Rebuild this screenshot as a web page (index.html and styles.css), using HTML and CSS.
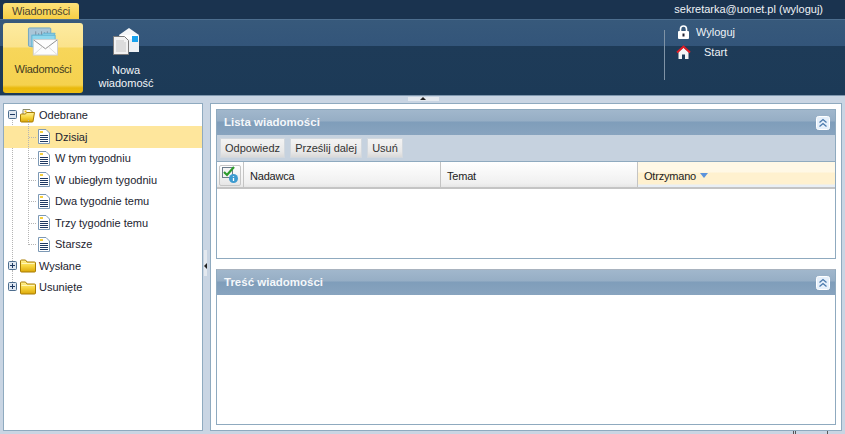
FILE: index.html
```html
<!DOCTYPE html>
<html lang="pl">
<head>
<meta charset="utf-8">
<title>Wiadomości</title>
<link rel="stylesheet" href="styles.css">
</head>
<body>
<svg class="defs" width="0" height="0" aria-hidden="true">
  <defs>
    <linearGradient id="fold" x1="0" y1="0" x2="0" y2="1"><stop offset="0" stop-color="#fff29a"/><stop offset=".5" stop-color="#f7d53e"/><stop offset="1" stop-color="#dba708"/></linearGradient>
    <symbol id="doc" viewBox="0 0 12 15">
      <path d="M.5.5h7.500l3.500 3.500v10.500h-11z" fill="#fff" stroke="#7d99b5"/>
      <rect x="2" y="2" width="3" height="2" fill="#f5cf3d"/>
      <path d="M2 6.500h8M2 8.500h8M2 10.500h8M2 12.500h8" stroke="#1f3a63"/>
    </symbol>
    <symbol id="folder" viewBox="0 0 16 15">
      <path d="M.5 13V3q0-1 1-1h4l1.500 2h7.500q1 0 1 1v8q0 1-1 1h-13q-1 0-1-1z" fill="url(#fold)" stroke="#a87d05"/>
      <path d="M1.500 5.500h13" stroke="#fff6b8"/>
    </symbol>
    <symbol id="plus" viewBox="0 0 9 9">
      <rect x=".5" y=".5" width="8" height="8" rx="1" fill="#dfe7f0" stroke="#4d6d8e"/>
      <path d="M2 4.500h5M4.500 2v5" stroke="#1f3a63"/>
    </symbol>
    <symbol id="minus" viewBox="0 0 9 9">
      <rect x=".5" y=".5" width="8" height="8" rx="1" fill="#dfe7f0" stroke="#4d6d8e"/>
      <path d="M2 4.500h5" stroke="#1f3a63"/>
    </symbol>
    <symbol id="chev" viewBox="0 0 14 14">
      <rect x=".5" y=".5" width="13" height="13" rx="2" fill="#e6f0fb" stroke="#fff"/>
      <path d="M3.500 6.500 7 3.500l3.500 3M3.500 10.500 7 7.500l3.500 3" fill="none" stroke="#4a79ac" stroke-width="1.300"/>
    </symbol>
  </defs>
</svg>

<header class="topbar">
  <div class="tab">Wiadomości</div>
  <div class="user">sekretarka@uonet.pl (wyloguj)</div>
</header>

<nav class="ribbon">
  <div class="rb rb-active">
    <svg class="rb-icon" width="32" height="31" viewBox="0 0 33 31">
      <rect x="1.500" y="1.500" width="23" height="19" rx="1" fill="#a9c6d8" stroke="#6fa6c4"/>
      <path d="M9 5v8M12 7v6M15 5v8M18 6v7M21 5v8" stroke="#7b8fa0"/>
      <path d="M5 10h22l2-3h-12l-2 2h-9z" fill="#8fd3ea" stroke="#63b3d2"/>
      <rect x="5" y="9" width="24" height="12" fill="#8fd8ee" stroke="#63b3d2"/>
      <rect x="6.500" y="13.500" width="25" height="16" fill="#fdfdfd" stroke="#cfcfcf"/>
      <path d="M7 14l12 9 12-9" fill="none" stroke="#8d8d8d"/>
      <path d="M7 29l9-8M31 29l-9-8" fill="none" stroke="#dcdcdc"/>
    </svg>
    <span class="rb-label rb-tight">Wiadomości</span>
  </div>
  <div class="rb rb-new">
    <svg class="rb-icon" width="29" height="28" viewBox="0 0 29 28">
      <path d="M7 8 17 1l10 7v17H7z" fill="#f4f6f8"/>
      <path d="M7 8l10 9 10-9" fill="#fff" stroke="#d5dae0"/>
      <rect x="7" y="12" width="20" height="13" fill="#eef1f4"/>
      <rect x="20" y="9" width="6" height="6" fill="#18a2ee"/>
      <path d="M1.500 9.500h11l4 4v14h-15z" fill="#f2f2f2" stroke="#7b7b7b"/>
      <path d="M4 14h8M4 16h10M4 18h10M4 20h10M4 22h10M4 24h10" stroke="#c6c6c6"/>
    </svg>
    <span class="rb-label">Nowa<br>wiadomość</span>
  </div>
  <div class="rb-links">
    <div class="rb-link">
      <svg width="13" height="14" viewBox="0 0 13 14"><path d="M3.500 7V4a3 3 0 0 1 6 0v3" fill="none" stroke="#fff" stroke-width="1.600"/><rect x="1" y="6" width="11" height="8" rx="1" fill="#fff"/><rect x="5.500" y="8.500" width="2" height="3" fill="#223"/></svg>
      <span>Wyloguj</span>
    </div>
    <div class="rb-link rb-link-start">
      <svg width="15" height="14" viewBox="0 0 15 14"><path d="M2.500 7 7.500 2.500l5 4.500v7H9V9.500H6V14H2.500z" fill="#f4f4f4"/><path d="M1 7.500 7.500 1.500 14 7.500" fill="none" stroke="#e01b24" stroke-width="2"/></svg>
      <span>Start</span>
    </div>
  </div>
</nav>

<main class="main">
  <aside class="tree">
    <div class="row"><svg class="tg" width="9" height="9"><use href="#minus"/></svg>
      <svg class="fi" width="16" height="15" viewBox="0 0 16 15"><path d="M3 11V1.500h7l3 3V11z" fill="#fff" stroke="#8a8a6a"/><rect x="4.500" y="2.500" width="2" height="2" fill="#e9b90f"/><path d="M.5 13.500V7q0-1 1-1h4l1-1.500h8l-1.500 9q0 .5-1 .5h-10.500z" fill="url(#fold)" stroke="#a87d05"/></svg>
      <span class="t1">Odebrane</span></div>
    <div class="children">
      <div class="row leaf sel"><svg class="di" width="12" height="15"><use href="#doc"/></svg><span class="t2">Dzisiaj</span></div>
      <div class="row leaf"><svg class="di" width="12" height="15"><use href="#doc"/></svg><span class="t2">W tym tygodniu</span></div>
      <div class="row leaf"><svg class="di" width="12" height="15"><use href="#doc"/></svg><span class="t2">W ubiegłym tygodniu</span></div>
      <div class="row leaf"><svg class="di" width="12" height="15"><use href="#doc"/></svg><span class="t2">Dwa tygodnie temu</span></div>
      <div class="row leaf"><svg class="di" width="12" height="15"><use href="#doc"/></svg><span class="t2">Trzy tygodnie temu</span></div>
      <div class="row leaf last"><svg class="di" width="12" height="15"><use href="#doc"/></svg><span class="t2">Starsze</span></div>
    </div>
    <div class="row"><svg class="tg" width="9" height="9"><use href="#plus"/></svg><svg class="fi" width="16" height="15"><use href="#folder"/></svg><span class="t1">Wysłane</span></div>
    <div class="row"><svg class="tg" width="9" height="9"><use href="#plus"/></svg><svg class="fi" width="16" height="15"><use href="#folder"/></svg><span class="t1">Usunięte</span></div>
  </aside>

  <div class="vsplit"><span class="vhandle"></span></div>

  <section class="content">
    <span class="hhandle"></span>
    <div class="panel panel-list">
      <div class="ph"><span class="ph-title">Lista wiadomości</span><svg width="14" height="14"><use href="#chev"/></svg></div>
      <div class="toolbar">
        <button class="btn w1">Odpowiedz</button>
        <button class="btn w2">Prześlij dalej</button>
        <button class="btn w3">Usuń</button>
      </div>
      <div class="grid-head">
        <div class="col col-check"><span class="chk">
          <svg width="18" height="18" viewBox="0 0 18 18"><rect x="1.500" y="1.500" width="10" height="10" fill="#f4f4f4" stroke="#6d7d8c"/><path d="M3 6l3 3 7-8" fill="none" stroke="#2c9a2c" stroke-width="2.200"/><circle cx="12.500" cy="12.500" r="4.500" fill="#3d9bd0"/><path d="M12.500 10v.8M12.500 12v3" stroke="#fff" stroke-width="1.300"/></svg>
        </span></div>
        <div class="col col-flex">Nadawca</div>
        <div class="col col-flex">Temat</div>
        <div class="col col-flex col-sort">Otrzymano<i class="sort"></i></div>
      </div>
    </div>
    <div class="panel panel-body">
      <div class="ph"><span class="ph-title">Treść wiadomości</span><svg width="14" height="14"><use href="#chev"/></svg></div>
    </div>
  </section>
</main>
<footer class="foot"><i></i><i></i><i class="far"></i></footer>
</body>
</html>
```
FILE: styles.css
```css
* { box-sizing: border-box; }
html, body { margin: 0; height: 100%; }
body {
  width: 845px;
  height: 434px;
  overflow: hidden;
  background: #c9d5e3;
  font: 11px "Liberation Sans", Arial, sans-serif;
  color: #222;
  display: flex;
  flex-direction: column;
}
.defs { position: absolute; }

.topbar {
  height: 19px;
  flex: none;
  background: #1a334f;
  display: flex;
  align-items: flex-end;
  justify-content: space-between;
  padding: 0 22px 0 3px;
}
.tab {
  width: 76px;
  height: 16px;
  border-radius: 3px 3px 0 0;
  background: linear-gradient(#fde27a, #f7cf45);
  color: #4a4430;
  text-align: center;
  line-height: 16px;
  letter-spacing: -.2px;
}
.user { color: #eef2f6; line-height: 18px; align-self: flex-start; }

.ribbon {
  height: 77px;
  flex: none;
  display: flex;
  padding: 3px 0 3px 3px;
  border-top: 1px solid #4d6e8e;
  border-bottom: 1px solid #7f97ae;
  background: linear-gradient(#37597b 0, #33557a 26px, #1e3b58 26px, #1c3a57 100%);
}
.rb {
  width: 80px;
  height: 70px;
  display: flex;
  flex-direction: column;
  align-items: center;
  color: #f2f5f8;
  text-align: center;
  line-height: 13px;
}
.rb-active {
  border-radius: 3px;
  color: #403a22;
  padding-top: 3px;
  background: linear-gradient(#fdeba0 0, #fbe38c 24px, #f7d65a 25px, #f5d24f 62px, #e9b90c 65px, #eebf14 100%);
}
.rb-active .rb-label { margin-top: 6px; }
.rb-tight { letter-spacing: -.3px; }
.rb-icon { display: block; flex: none; }
.rb-new { margin-left: 3px; padding-top: 4px; }
.rb-new .rb-label { margin-top: 9px; }
.rb-links {
  margin: 7px 0 0 498px;
  height: 50px;
  padding-left: 12px;
  border-left: 1px solid #7f93a6;
  color: #eef2f6;
}
.rb-link { display: flex; align-items: center; height: 20px; margin-top: -8px; margin-bottom: 8px; }
.rb-link span { margin-left: 6px; }
.rb-link-start { margin-left: -1px; }
.rb-link-start span { margin-left: 13px; }

.main {
  height: 328px;
  flex: none;
  margin-top: 7px;
  padding: 0 3px;
  display: flex;
}
.tree {
  width: 200px;
  flex: none;
  background: #fff;
  border: 1px solid #8faabf;
  padding-top: .5px;
}
.row {
  position: relative;
  height: 21.5px;
  display: flex;
  align-items: center;
  padding-left: 4px;
  white-space: nowrap;
  color: #1c2430;
}
.tg { flex: none; margin-top: -1px; }
.fi { flex: none; margin-left: 3px; }
.t1 { margin-left: 3px; }
.row:not(.leaf) + .row:not(.leaf)::before {
  content: "";
  position: absolute;
  left: 8px;
  top: -7px;
  height: 12px;
  border-left: 1px dotted #b5b5b5;
}
.children { position: relative; }
.children::before {
  content: "";
  position: absolute;
  left: 8px;
  top: -6px;
  bottom: -6px;
  border-left: 1px dotted #b5b5b5;
}
.children::after {
  content: "";
  position: absolute;
  left: 24px;
  top: -6px;
  bottom: 10px;
  border-left: 1px dotted #b5b5b5;
}
.leaf { padding-left: 34px; }
.leaf::before {
  content: "";
  position: absolute;
  left: 25px;
  top: 50%;
  width: 7px;
  border-top: 1px dotted #b5b5b5;
}
.sel { background: #fee69c; }
.di { flex: none; }
.t2 { margin-left: 5px; }

.vsplit {
  width: 7px;
  flex: none;
  position: relative;
}
.vhandle {
  position: absolute;
  left: 1px;
  top: 147px;
  width: 3px;
  height: 26px;
  background: #e4e9ef;
}
.vhandle::after {
  content: "";
  position: absolute;
  left: 0;
  top: 13px;
  border: 3px solid transparent;
  border-left: 0;
  border-right-color: #222;
}

.content {
  position: relative;
  flex: 1;
  background: #fff;
  border: 1px solid #8faabf;
  padding: 5px;
  display: flex;
  flex-direction: column;
  gap: 10px;
}
.hhandle {
  position: absolute;
  left: 197px;
  top: -7px;
  width: 31px;
  height: 4px;
  background: #e4e9ef;
}
.hhandle::after {
  content: "";
  position: absolute;
  left: 12px;
  top: 0;
  border: 3px solid transparent;
  border-top: 0;
  border-bottom-color: #222;
}

.panel { border: 1px solid #8faabf; background: #fff; }
.panel-list { height: 150px; }
.panel-body { flex: 1; border-top-color: #a9b3bf; }
.ph {
  height: 25px;
  display: flex;
  align-items: center;
  justify-content: space-between;
  padding: 0 5px 0 7px;
  color: #f4f7fa;
  font-size: 11.5px;
  font-weight: bold;
  background: linear-gradient(#a1b7cc 0, #96aec5 11px, #7f9dba 12px, #88a4bf 100%);
}
.ph-title { margin-top: -2px; }
.toolbar {
  height: 26px;
  display: flex;
  gap: 5px;
  padding: 3px 0 0 3px;
  background: #c6d2df;
}
.btn {
  height: 20px;
  padding: 0;
  font: inherit;
  color: #333;
  border: 1px solid #d2d8de;
  background: linear-gradient(#f3f3f3, #e8e8e8 70%, #d9d9d9);
}
.w1 { width: 65px; }
.w2 { width: 72px; }
.w3 { width: 36px; }
.grid-head {
  height: 28px;
  display: flex;
  border-top: 1px solid #8faabf;
  border-bottom: 2px solid #c4c4c4;
  background: linear-gradient(#ffffff, #f0f0f0 85%, #e6e6e6);
}
.col {
  display: flex;
  align-items: center;
  padding: 3px 0 0 6px;
  border-right: 1px solid #c4c4c4;
  letter-spacing: -.2px;
}
.col-check { width: 27px; padding: 1px 0 0 2px; flex: none; }
.chk {
  width: 22px;
  height: 21px;
  display: flex;
  align-items: center;
  justify-content: center;
  border: 1px solid #c6c6c6;
  border-radius: 2px;
  background: linear-gradient(#fff, #e6e6e6);
}
.col-flex { width: 197px; flex: none; }
.col-sort {
  flex: 1;
  border-right: 0;
  background: linear-gradient(#fff8e6 0, #fff8e6 10px, #fff1cf 11px, #fff1cf 22px, #e9eff5 23px);
}
.sort {
  margin-left: 4px;
  margin-top: -2px;
  border: 4px solid transparent;
  border-bottom: 0;
  border-top: 5px solid #5b93dc;
}

.foot {
  height: 3px;
  flex: none;
  display: flex;
  justify-content: flex-end;
  gap: 1px;
  padding-right: 17px;
}
.foot i { width: 1px; height: 3px; background: #555; }
.foot i.far { margin-left: 30px; }
```
